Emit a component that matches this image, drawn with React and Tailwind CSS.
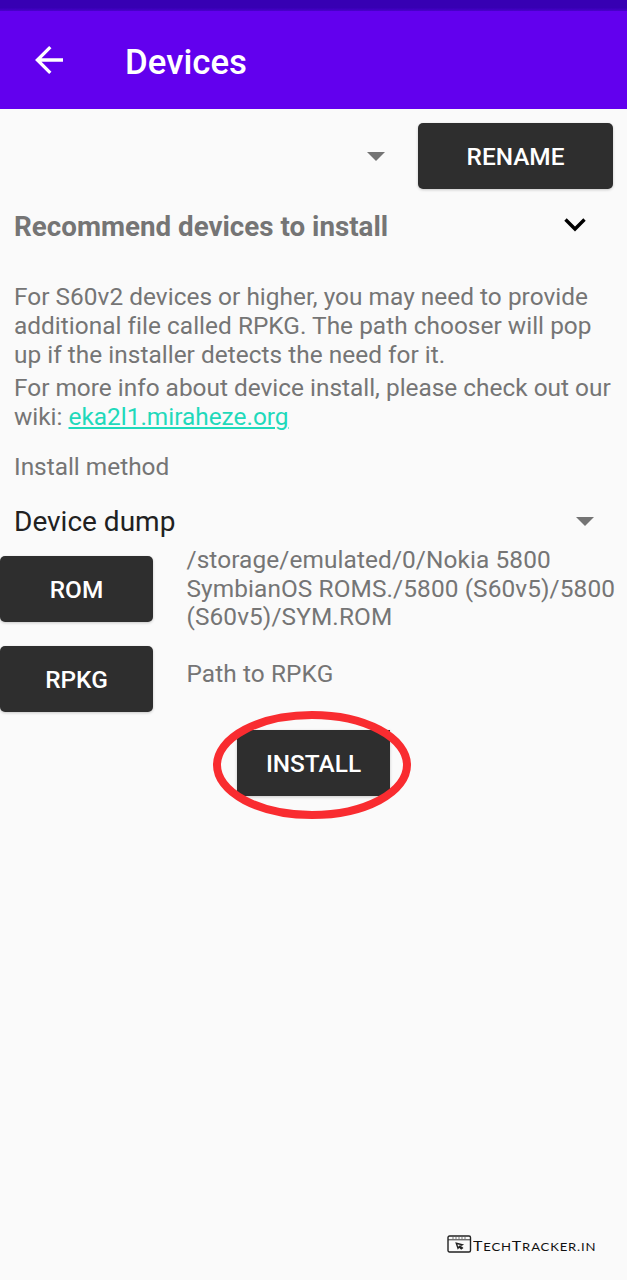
import React from "react";

function Caret({ className = "" }) {
  return (
    <svg viewBox="0 0 18 9" className={`h-[9px] w-[18px] fill-[#747474] ${className}`}>
      <path d="M0 0H18L9 9Z" />
    </svg>
  );
}

function Button({ children, className = "" }) {
  return (
    <button
      className={`h-[66px] shrink-0 bg-[#2e2e2e] text-center text-[24.4px] font-medium text-white shadow-[0_1px_3px_rgba(0,0,0,0.2)] ${className}`}
    >
      {children}
    </button>
  );
}

function Header() {
  return (
    <header className="h-[109px] bg-[#6200ee]">
      <div className="h-[11px] bg-linear-to-b from-[#3700b3] from-70% to-[#4a00cc]" />
      <div className="flex h-[98px] items-center pl-[35px]">
        <svg viewBox="0 0 28 28" className="h-7 w-7 fill-none stroke-white stroke-[3.3]">
          <path d="M28 14H3M15.3 1.2L2.4 14L15.3 26.8" />
        </svg>
        <h1 className="ml-[62px] mt-[4px] text-[34.8px] leading-10 font-medium text-white">Devices</h1>
      </div>
    </header>
  );
}

function Watermark() {
  return (
    <footer className="mt-auto mb-[24px] flex h-6 items-center pl-[447px] text-[#111]">
      <svg viewBox="0 0 25 18" className="h-[18px] w-[25px] fill-none stroke-[#222]">
        <rect x="1" y="1" width="22.5" height="16" rx="1.5" strokeWidth="1.4" />
        <path d="M1 4.8H23.5" strokeWidth="0.9" />
        <path d="M5 3H20" strokeWidth="1" strokeDasharray="2 1" strokeOpacity="0.6" />
        <path d="M9.3 8.3L15.2 9.8L13.2 10.9L15.4 12.9L14.2 13.8L12.1 11.8L11 13.3Z" strokeWidth="1.4" />
      </svg>
      <span className="mt-[3px] ml-[1px] origin-left scale-x-[1.16] font-[Lato,sans-serif] text-[13.8px] leading-none tracking-[0.7px] whitespace-nowrap">
        T<span className="text-[11.3px]">ECH</span>T<span className="text-[11.3px]">RACKER.IN</span>
      </span>
    </footer>
  );
}

export default function App() {
  return (
    <div className="flex h-[1280px] w-[627px] flex-col overflow-hidden bg-[#fafafa] font-[Roboto,sans-serif] text-[24.4px] leading-[28.8px] text-[#757575]">
      <Header />
      <main>
        <div className="flex h-20 items-start justify-end pt-[14px] pr-[14px]">
          <Caret className="mt-[29px] mr-[33px]" />
          <Button className="w-[195px] rounded-[5px] pt-[2px]">RENAME</Button>
        </div>
        <div className="flex h-[75px] items-start justify-between pt-[23px] pr-[41px] pl-[14px]">
          <h2 className="text-[27.75px] leading-[30px] font-bold whitespace-nowrap">
            Recommend devices to install
          </h2>
          <svg viewBox="0 0 22 14" className="mt-[6px] h-[14px] w-[22px] fill-none stroke-black stroke-[3.4]">
            <path d="M1.5 1.5L11 11L20.5 1.5" />
          </svg>
        </div>
        <div className="pt-[19px] pl-[14px] whitespace-nowrap">
          <p className="tracking-[0.03px]">
            For S60v2 devices or higher, you may need to provide
            <br />
            additional file called RPKG. The path chooser will pop
            <br />
            up if the installer detects the need for it.
          </p>
          <p className="mt-[5px]">
            For more info about device install, please check out our
            <br />
            wiki:{" "}
            <a className="text-[#1fd9bb] underline decoration-[1.5px] underline-offset-[2px]">eka2l1.miraheze.org</a>
          </p>
          <p className="mt-[21px]">Install method</p>
        </div>
        <div className="mt-[24px] flex h-[34px] items-center justify-between pr-[33px] pl-[14px] text-[28px] text-[#212121]">
          <span>Device dump</span>
          <Caret className="-mt-[2px]" />
        </div>
        <div className="mt-[5px] flex h-[92px] items-start">
          <Button className="mt-[11px] w-[153px] rounded-[5px] pt-[3px]">ROM</Button>
          <p className="mt-[1px] ml-[33.5px] tracking-[0.1px] whitespace-nowrap">
            /storage/emulated/0/Nokia 5800
            <br />
            SymbianOS ROMS./5800 (S60v5)/5800
            <br />
            (S60v5)/SYM.ROM
          </p>
        </div>
        <div className="mt-[9px] flex h-[66px] items-start">
          <Button className="w-[153px] rounded-[5px] pt-[4px]">RPKG</Button>
          <p className="mt-[14px] ml-[33.5px] tracking-[0.1px]">Path to RPKG</p>
        </div>
        <div className="relative mt-[18px] flex justify-center">
          <Button className="w-[153px] pt-[3px]">INSTALL</Button>
          <svg
            viewBox="0 0 200 110"
            className="absolute -top-[20px] left-[212px] h-[110px] w-[200px] fill-none stroke-[#f92c30] stroke-[8]"
          >
            <ellipse cx="100" cy="55" rx="95" ry="50" />
          </svg>
        </div>
      </main>
      <Watermark />
    </div>
  );
}
